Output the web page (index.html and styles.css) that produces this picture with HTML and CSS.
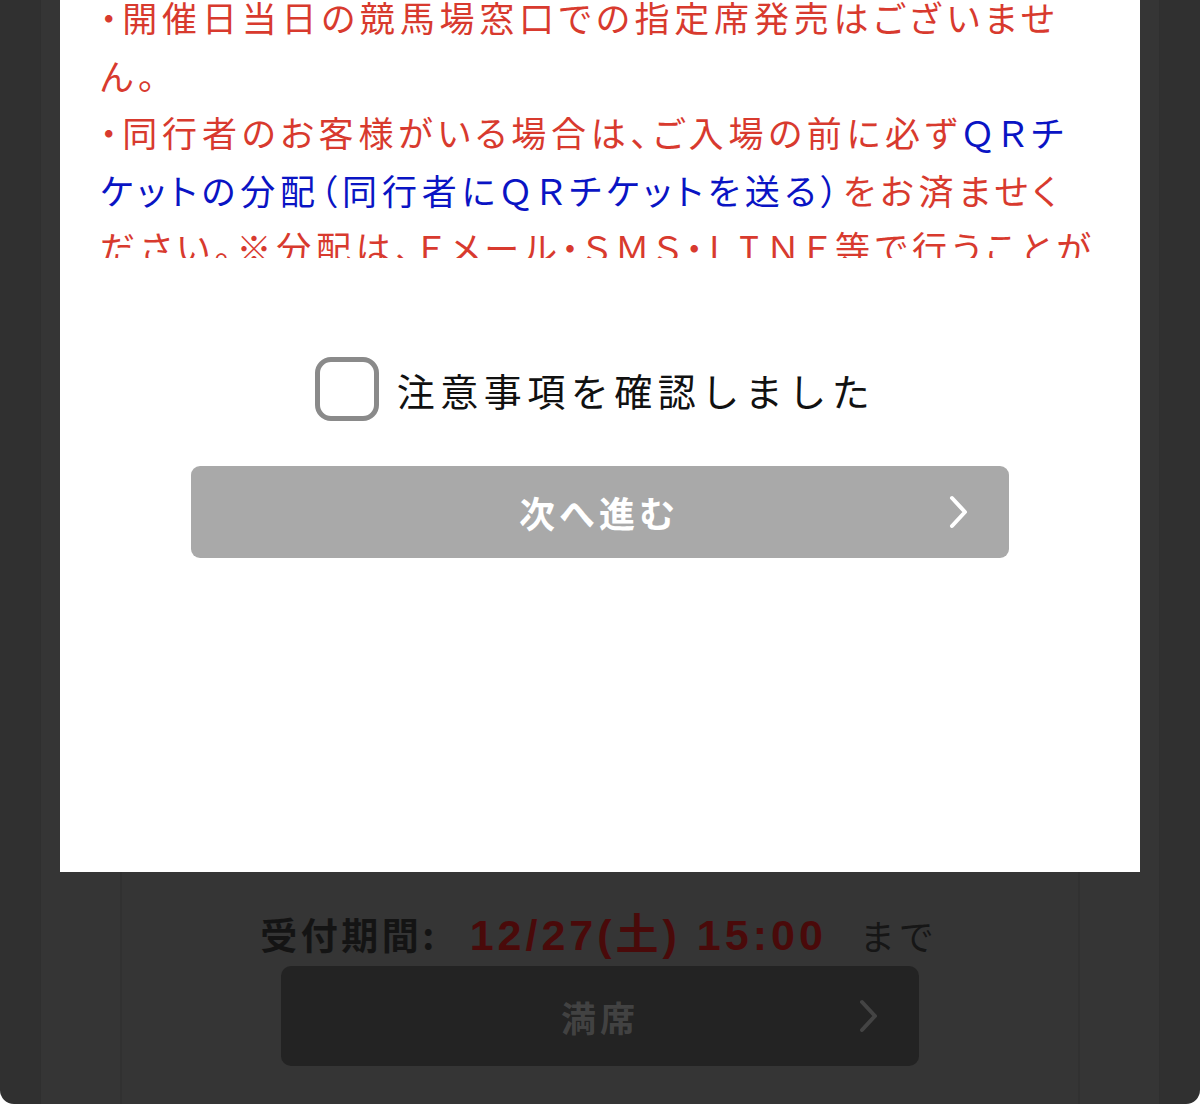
FILE: index.html
```html
<!DOCTYPE html>
<html lang="ja">
<head>
<meta charset="utf-8">
<title>注意事項</title>
<link rel="stylesheet" href="styles.css">
</head>
<body>
<div class="screen">
  <div class="page">
    <div class="card">
      <div class="inner">
        <div class="period">
          <span class="period-label">受付期間:</span>
          <span class="period-date">12/27(土) 15:00</span>
          <span class="period-until">まで</span>
        </div>
        <div class="full-btn">
          <span class="full-text">満席</span>
          <svg class="chev chev-dark" viewBox="0 0 20 34" width="20" height="34"><polyline points="3,3 16,17 3,31" fill="none" stroke="currentColor" stroke-width="4" stroke-linecap="round" stroke-linejoin="round"/></svg>
        </div>
      </div>
    </div>
  </div>

  <div class="modal">
    <div class="notes">
      <p class="notes-text">・開催日当日の競馬場窓口での指定席発売はございませ<br>ん。<br>・同行者のお客様がいる場合は、ご入場の前に必ず<span class="blue">ＱＲチ<br>ケットの分配（同行者にＱＲチケットを送る）</span>をお済ませく<br>ださい。※分配は、Ｅメール・ＳＭＳ・ＬＩＮＥ等で行うことが<br>できます。</p>
    </div>
    <label class="confirm">
      <span class="checkbox"></span>
      <span class="confirm-text">注意事項を確認しました</span>
    </label>
    <div class="next-btn">
      <span class="next-text">次へ進む</span>
      <svg class="chev chev-light" viewBox="0 0 20 34" width="20" height="34"><polyline points="3,3 16,17 3,31" fill="none" stroke="currentColor" stroke-width="4" stroke-linecap="round" stroke-linejoin="round"/></svg>
    </div>
  </div>
</div>
</body>
</html>
```

FILE: styles.css
```css
html, body {
  margin: 0;
  padding: 0;
  background: #ffffff;
}

body {
  font-family: "Noto Sans CJK JP", "Noto Sans", sans-serif;
}

.screen {
  position: relative;
  width: 1200px;
  height: 1104px;
  overflow: hidden;
  border-radius: 0 0 14px 14px;
  background: #303030;
}

.page {
  height: 100%;
  display: flex;
  flex-direction: column;
}

.card {
  flex: 1;
  margin: 0 40px;
  background: #353535;
  border-left: 1px solid #2f2f2f;
  border-right: 1px solid #2f2f2f;
  display: flex;
}

.inner {
  flex: 1;
  margin: 0 79px;
  border-left: 2px solid #313131;
  border-right: 2px solid #313131;
  display: flex;
  flex-direction: column;
  align-items: center;
  padding-top: 900px;
}

.period {
  display: flex;
  align-items: baseline;
  height: 66px;
  margin-right: 2px;
}

.period-label {
  font-size: 37px;
  font-weight: 700;
  color: #141414;
  letter-spacing: 3.5px;
}

.period-date {
  font-family: "Liberation Sans", "Noto Sans CJK JP", sans-serif;
  font-size: 43px;
  font-weight: 700;
  color: #4a0a0a;
  margin-left: 32px;
  letter-spacing: 4px;
}

.period-until {
  font-size: 35px;
  color: #161616;
  margin-left: 33px;
  letter-spacing: 4px;
}

.full-btn {
  width: 638px;
  height: 100px;
  background: #232323;
  border-radius: 10px;
  display: flex;
  align-items: center;
  justify-content: center;
  position: relative;
}

.full-text {
  font-size: 35px;
  font-weight: 700;
  color: #424242;
  letter-spacing: 4px;
}

.chev {
  position: absolute;
  top: 50%;
  transform: translateY(-50%);
}

.chev-dark {
  right: 40px;
  color: #444444;
}

.modal {
  position: absolute;
  top: 0;
  left: 60px;
  width: 1080px;
  height: 872px;
  background: #ffffff;
  display: flex;
  flex-direction: column;
  align-items: center;
}

.notes {
  align-self: stretch;
  height: 258px;
  overflow: hidden;
  padding: 0 40px;
}

.notes-text {
  margin: -12px 0 0 0;
  font-size: 35px;
  line-height: 57.5px;
  letter-spacing: 4.8px;
  font-feature-settings: "palt";
  color: #d83a2e;
  white-space: nowrap;
}

.blue {
  color: #0a14c4;
}

.confirm {
  display: flex;
  align-items: center;
  margin-top: 99px;
  margin-right: 10px;
}

.checkbox {
  width: 54px;
  height: 54px;
  border: 5px solid #8a8a8a;
  border-radius: 16px;
  background: #ffffff;
}

.confirm-text {
  margin-left: 18px;
  font-size: 38px;
  letter-spacing: 5.5px;
  color: #111111;
}

.next-btn {
  margin-top: 45px;
  width: 818px;
  height: 92px;
  background: #a9a9a9;
  border-radius: 9px;
  display: flex;
  align-items: center;
  justify-content: center;
  position: relative;
}

.next-text {
  font-size: 36px;
  font-weight: 700;
  color: #ffffff;
  letter-spacing: 4px;
  margin-right: 2px;
}

.chev-light {
  right: 40px;
  color: #ffffff;
}
```
